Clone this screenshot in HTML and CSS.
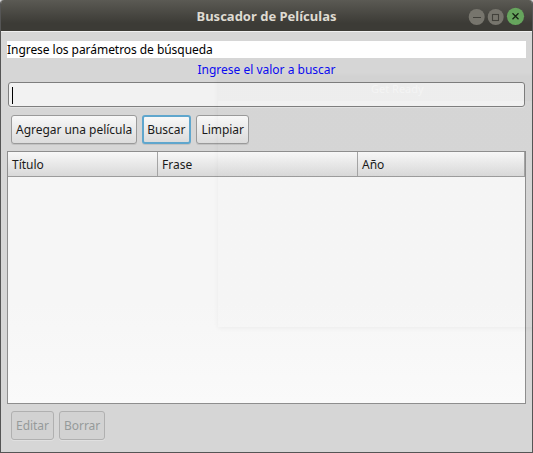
FILE: index.html
```html
<!DOCTYPE html>
<html lang="es">
<head>
<meta charset="utf-8">
<title>Buscador de Películas</title>
<link rel="stylesheet" href="styles.css">
</head>
<body>
<div class="window">
  <header class="titlebar">
    <h1 class="title">Buscador de Películas</h1>
    <svg class="controls" width="58" height="20" viewBox="0 0 58 20">
      <circle cx="8.700" cy="11" r="8" fill="#77756d"/>
      <path d="M5 11.500h8" stroke="#42413b" stroke-width="1"/>
      <circle cx="27.700" cy="11" r="8" fill="#77756d"/>
      <rect x="24.500" y="8.500" width="6" height="6" fill="none" stroke="#42413b" stroke-width="1.100"/>
      <circle cx="47.500" cy="10.300" r="8.600" fill="#66a55d"/>
      <path d="M44.500 7.300l6 6m0-6l-6 6" stroke="#182515" stroke-width="1.300"/>
    </svg>
  </header>
  <main class="content">
    <p class="banner">Ingrese los parámetros de búsqueda</p>
    <label class="prompt" for="q">Ingrese el valor a buscar</label>
    <div class="field" id="q"><span class="caret"></span></div>
    <div class="buttons">
      <button class="btn">Agregar una película</button>
      <button class="btn focused">Buscar</button>
      <button class="btn">Limpiar</button>
    </div>
    <div class="table">
      <div class="head"><span>Título</span><span>Frase</span><span>Año</span></div>
    </div>
    <div class="buttons footer">
      <button class="btn" disabled>Editar</button>
      <button class="btn" disabled>Borrar</button>
    </div>
  </main>
  <div class="ghost">Get Ready</div>
</div>
</body>
</html>
```
FILE: styles.css
```css
* { box-sizing: border-box; }
body { margin: 0; background: #d6d6d6; font: 12px/17px "Noto Sans", sans-serif; color: #1a1a1a; }
.window {
  position: relative; width: 533px; height: 453px; overflow: hidden;
  border: 1px solid #555; border-top: 0; border-radius: 4px 4px 0 0;
  background: #d6d6d6;
}
.titlebar {
  display: grid; grid-template-columns: 1fr auto 1fr; height: 31px;
  background: linear-gradient(#5b5a54, #3c3b36 75%);
}
.title { grid-column: 2; margin: 1px 0 0; font-size: 13px; line-height: 31px; font-weight: 700; color: #dfdbd2; white-space: nowrap; }
.controls { justify-self: end; margin: 6px 6px 0 0; }
.content { display: flex; flex-direction: column; padding: 10px 6px 0; box-shadow: inset 0 1px #efefef; }
.banner { margin: 0; height: 17px; background: #fff; color: #000; letter-spacing: -.05px; }
.prompt { height: 24px; line-height: 23px; text-align: center; color: #0a0af0; }
.field {
  height: 25px; margin: 0 1px; padding: 4px 3px; border: 1px solid #7e7e7e;
  border-radius: 3px; background: #f2f2f2; box-shadow: 0 1px #e2e2e2;
}
.caret { display: block; width: 1px; height: 17px; background: #000; }
.buttons { display: flex; gap: 5px; height: 29px; margin: 8px 4px 7px; }
.buttons.footer { margin-top: 7px; }
.btn {
  height: 29px; padding: 0 4px; font: inherit; letter-spacing: -.03px; color: #1a1a1a; white-space: nowrap;
  border: 1px solid #9a9a9a; border-radius: 3px;
  background: linear-gradient(#f8f8f8, #dcdcdc); box-shadow: 0 1px #c2c2c2;
}
.btn.focused { border: 2px solid #5fa6cd; padding: 0 4px 0 3px; }
.btn:disabled { color: #969a9a; border-color: #b0b0b0; background: #d2d2d2; box-shadow: 0 1px #e0e0e0; }
.table { height: 253px; border: 1px solid #8e8e8e; background: linear-gradient(#f6f6f6 60%, #fafafa); }
.head {
  display: grid; grid-template: 24px / 150px 200px 1fr; height: 25px; line-height: 26px;
  border-bottom: 1px solid #9c9c9c; background: linear-gradient(#f8f8f8, #d9d9d9);
}
.head span { padding-left: 4px; border-right: 1px solid #a4a4a4; }
.ghost {
  position: absolute; left: 217px; top: 76px; width: 330px; height: 251px;
  padding-left: 153px; line-height: 26px; font-size: 11px; color: rgba(255,255,255,.4);
  background: linear-gradient(rgba(0,0,0,.018) 25px, rgba(0,0,0,.003) 25px);
  box-shadow: 0 1px 5px rgba(0,0,0,.05); pointer-events: none;
}
```
